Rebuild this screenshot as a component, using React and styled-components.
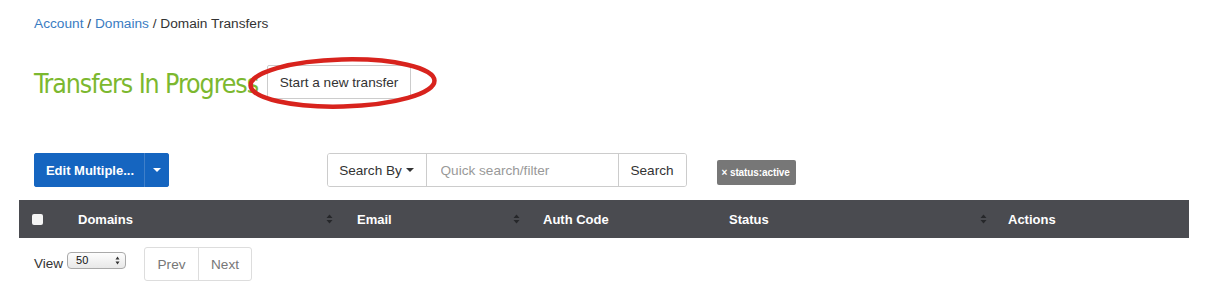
import React from "react";
import styled, { createGlobalStyle } from "styled-components";

const Global = createGlobalStyle`
  html, body { margin: 0; padding: 0; background: #fff; }
  body {
    font-family: "Liberation Sans", Arial, sans-serif;
    font-size: 13px;
    color: #333;
  }
  * { box-sizing: border-box; }
`;

const Page = styled.div`
  width: 1207px;
  padding: 0 18px 0 19px;
`;

const Breadcrumb = styled.div`
  padding: 16px 15px 0;
  height: 30px;
  line-height: 16px;
  font-size: 13.7px;
  color: #333;
`;

const Crumb = styled.a`
  color: #3a7cc2;
  text-decoration: none;
`;

const TitleRow = styled.div`
  display: flex;
  align-items: center;
  gap: 9px;
  padding: 0 15px;
  margin-top: 35px;
  height: 34px;
`;

const Title = styled.h1`
  margin: 0;
  font-family: "Liberation Sans Narrow", "DejaVu Sans Condensed", sans-serif;
  font-weight: 400;
  font-size: 26.5px;
  letter-spacing: -1.08px;
  color: #7cb82f;
  line-height: 34px;
  position: relative;
  top: 2px;
`;

const ButtonWrap = styled.div`
  position: relative;
`;

const DefaultButton = styled.button`
  font-family: inherit;
  font-size: 13.6px;
  color: #333;
  background: #fff;
  border: 1px solid #ccc;
  border-radius: 2px;
  height: 34px;
  width: 144px;
  padding: 0;
  cursor: pointer;
`;

const Ring = styled.svg`
  position: absolute;
  left: -24px;
  top: -13px;
  pointer-events: none;
  overflow: visible;
`;

const Toolbar = styled.div`
  display: grid;
  grid-template-columns: repeat(12, 1fr);
  margin-top: 54px;
  height: 34px;
  align-items: start;
`;

const Col = styled.div`
  grid-column: ${(p) => p.$start} / span ${(p) => p.$span};
  padding: 0 15px;
  display: flex;
  align-items: flex-start;
  padding-top: ${(p) => p.$top || 0}px;
`;

const SplitButton = styled.div`
  display: flex;
  height: 34px;
  border-radius: 3px;
  overflow: hidden;
  background: #1565c0;
`;

const SplitMain = styled.button`
  font-family: inherit;
  font-weight: 700;
  font-size: 13px;
  color: #fff;
  background: #1565c0;
  border: none;
  width: 110px;
  padding: 0 0 0 2px;
  height: 34px;
`;

const SplitCaret = styled.button`
  background: #1565c0;
  border: none;
  border-left: 1px solid #3f7fc9;
  width: 25px;
  height: 34px;
  display: flex;
  align-items: center;
  justify-content: center;
  padding: 0;
`;

const Caret = styled.span`
  display: inline-block;
  width: 0;
  height: 0;
  border-left: 4px solid transparent;
  border-right: 4px solid transparent;
  border-top: 4px solid ${(p) => p.$color || "#fff"};
  margin-left: ${(p) => p.$ml || 0}px;
  vertical-align: middle;
`;

const SearchGroup = styled.div`
  display: flex;
  width: 100%;
  height: 34px;
  border: 1px solid #ccc;
  border-radius: 3px;
  overflow: hidden;
`;

const SearchBy = styled.button`
  flex: none;
  font-family: inherit;
  font-size: 13.6px;
  color: #333;
  background: #fff;
  border: none;
  border-right: 1px solid #ccc;
  width: 99px;
  padding: 0;
  display: flex;
  align-items: center;
  justify-content: center;
`;

const SearchInput = styled.input`
  flex: 1;
  min-width: 0;
  font-family: inherit;
  font-size: 13.6px;
  border: none;
  outline: none;
  padding: 0 12px 0 14px;
  color: #333;
  &::placeholder { color: #999; }
`;

const SearchButton = styled.button`
  flex: none;
  font-family: inherit;
  font-size: 13.6px;
  color: #333;
  background: #fff;
  border: none;
  border-left: 1px solid #ccc;
  width: 68px;
  padding: 0;
`;

const Badge = styled.span`
  display: inline-flex;
  align-items: center;
  height: 25px;
  padding: 0 6px 0 5px;
  background: #777;
  color: #fff;
  font-weight: 700;
  font-size: 10px;
  border-radius: 2px;
  letter-spacing: -0.1px;
`;

const TableHead = styled.div`
  display: grid;
  grid-template-columns: 44px 279px 186px 186px 279px 196px;
  height: 38px;
  margin-top: 13px;
  background: #4a4b50;
  align-items: center;
`;

const HeadCell = styled.div`
  display: flex;
  align-items: center;
  justify-content: space-between;
  padding: 0 ${(p) => p.$pr ?? 15}px 0 ${(p) => p.$pl ?? 15}px;
  font-weight: 700;
  font-size: 13px;
  color: #fff;
`;

const Check = styled.span`
  display: block;
  flex: none;
  width: 11px;
  height: 11px;
  background: #f4f4f4;
  border-radius: 2px;
  margin-left: 13px;
`;

const SortIcon = () => (
  <svg width="7" height="10" viewBox="0 0 7 10">
    <path d="M3.5 0.5 L6.5 4 L0.5 4 Z M0.5 6 L6.5 6 L3.5 9.5 Z" fill="#26272a" />
  </svg>
);

const Footer = styled.div`
  display: flex;
  align-items: center;
  padding: 0 15px;
  margin-top: 9px;
  height: 34px;
`;

const ViewLabel = styled.span`
  font-size: 13.5px;
  color: #333;
  margin-right: 4px;
  position: relative;
  top: -1px;
`;

const FakeSelect = styled.div`
  width: 59px;
  height: 17px;
  border: 1px solid #a9a9a9;
  border-radius: 4px;
  background: linear-gradient(#fdfdfd, #e8e8e8);
  display: flex;
  align-items: center;
  justify-content: space-between;
  padding: 0 5px 0 8px;
  font-size: 11px;
  color: #111;
  position: relative;
  top: -4px;
`;

const Stepper = () => (
  <svg width="5" height="9" viewBox="0 0 5 9">
    <path d="M2.5 0.5 L4.5 3.5 L0.5 3.5 Z M0.5 5.5 L4.5 5.5 L2.5 8.5 Z" fill="#333" />
  </svg>
);

const Pager = styled.div`
  display: flex;
  margin-left: 18px;
  border: 1px solid #ddd;
  border-radius: 3px;
  height: 34px;
  overflow: hidden;
`;

const PageLink = styled.a`
  display: flex;
  align-items: center;
  justify-content: center;
  width: ${(p) => p.$w}px;
  color: #777;
  font-size: 13.6px;
  border-left: ${(p) => (p.$first ? "none" : "1px solid #ddd")};
  text-decoration: none;
`;

export default function App() {
  return (
    <Page>
      <Global />
      <Breadcrumb>
        <Crumb href="#">Account</Crumb> / <Crumb href="#">Domains</Crumb> / Domain Transfers
      </Breadcrumb>
      <TitleRow>
        <Title>Transfers In Progress</Title>
        <ButtonWrap>
          <DefaultButton>Start a new transfer</DefaultButton>
          <Ring width="200" height="60" viewBox="0 0 200 60">
            <ellipse cx="99.5" cy="31" rx="92" ry="23.5" fill="none" stroke="#d8231d" strokeWidth="4.5" transform="rotate(-1.5 99.5 31)" />
          </Ring>
        </ButtonWrap>
      </TitleRow>
      <Toolbar>
        <Col $start={1} $span={3}>
          <SplitButton>
            <SplitMain>Edit Multiple...</SplitMain>
            <SplitCaret><Caret /></SplitCaret>
          </SplitButton>
        </Col>
        <Col $start={4} $span={4}>
          <SearchGroup>
            <SearchBy>Search By<Caret $color="#333" $ml={4} /></SearchBy>
            <SearchInput placeholder="Quick search/filter" />
            <SearchButton>Search</SearchButton>
          </SearchGroup>
        </Col>
        <Col $start={8} $span={3} $top={7}>
          <Badge>× status:active</Badge>
        </Col>
      </Toolbar>
      <TableHead>
        <HeadCell $pl={0}><Check /></HeadCell>
        <HeadCell $pr={9}>Domains<SortIcon /></HeadCell>
        <HeadCell $pr={8}>Email<SortIcon /></HeadCell>
        <HeadCell>Auth Code</HeadCell>
        <HeadCell $pr={6}>Status<SortIcon /></HeadCell>
        <HeadCell>Actions</HeadCell>
      </TableHead>
      <Footer>
        <ViewLabel>View</ViewLabel>
        <FakeSelect>50<Stepper /></FakeSelect>
        <Pager>
          <PageLink href="#" $first $w={53}>Prev</PageLink>
          <PageLink href="#" $w={53}>Next</PageLink>
        </Pager>
      </Footer>
    </Page>
  );
}
